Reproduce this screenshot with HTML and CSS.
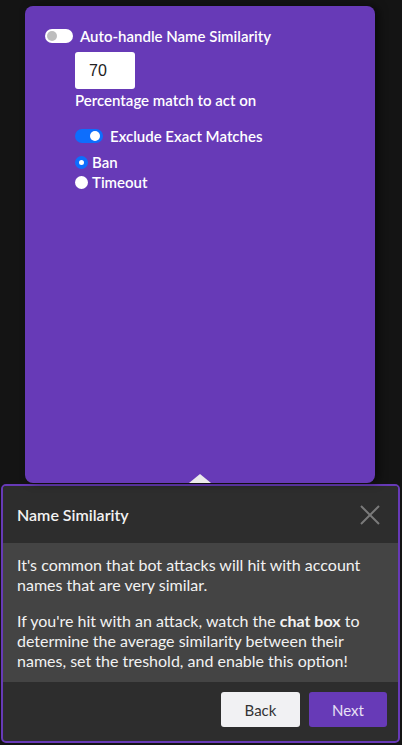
FILE: index.html
```html
<!DOCTYPE html>
<html>
<head>
<meta charset="utf-8">
<link rel="stylesheet" href="styles.css">
</head>
<body>
<div class="card">
  <div class="row first">
    <span class="switch off"><span class="knob"></span></span>
    <span class="label">Auto-handle Name Similarity</span>
  </div>
  <div class="sub">
    <div class="input">70</div>
    <div class="hint">Percentage match to act on</div>
    <div class="row second">
      <span class="switch on"><span class="knob"></span></span>
      <span class="label">Exclude Exact Matches</span>
    </div>
    <div class="radio-row"><span class="radio checked"></span><span class="label">Ban</span></div>
    <div class="radio-row"><span class="radio"></span><span class="label">Timeout</span></div>
  </div>
  <span class="arrow"></span>
</div>
<div class="popover">
  <div class="pop-head">
    <span class="pop-title">Name Similarity</span>
    <svg class="close" width="20" height="20" viewBox="0 0 20 20"><path d="M1 1L19 19M19 1L1 19" stroke="#7a7a7a" stroke-width="2" fill="none"/></svg>
  </div>
  <div class="pop-body">
    <p>It's common that bot attacks will hit with account names that are very similar.</p>
    <p>If you're hit with an attack, watch the <b>chat box</b> to determine the average similarity between their names, set the treshold, and enable this option!</p>
  </div>
  <div class="pop-foot">
    <button class="btn back">Back</button>
    <button class="btn next">Next</button>
  </div>
</div>
</body>
</html>
```
FILE: styles.css
```css
* { box-sizing: border-box; }
html, body { margin: 0; padding: 0; }
body {
  background: #141414;
  font-family: "Lato", "Open Sans", sans-serif;
  color: #fff;
  width: 402px;
  height: 745px;
  overflow: hidden;
  padding-top: 6px;
}
.card {
  position: relative;
  margin: 0 27px 0 25px;
  height: 477px;
  background: #673ab7;
  border-radius: 8px;
  box-shadow: 4px 0 8px rgba(0,0,0,0.5);
  padding: 21px 0 0 20px;
}
.row { display: flex; align-items: center; }
.label { font-size: 15px; font-weight: 600; line-height: 18px; color: #fff; }
.switch {
  position: relative;
  width: 28px;
  height: 14px;
  border-radius: 7px;
  margin-right: 7px;
  flex: none;
}
.switch .knob {
  position: absolute;
  top: 2px;
  width: 10px;
  height: 10px;
  border-radius: 50%;
}
.switch.off { background: #fff; }
.switch.off .knob { left: 2px; background: #bdbdbd; }
.switch.on { background: #0d6efd; }
.switch.on .knob { right: 3px; background: #fff; }
.sub { padding-left: 30px; }
.input {
  margin-top: 7px;
  width: 60px;
  height: 37px;
  background: #fff;
  border-radius: 3px;
  color: #222;
  font-family: "Liberation Sans", Arial, sans-serif;
  font-size: 16px;
  line-height: 37px;
  padding-left: 14px;
}
.hint { font-size: 15px; font-weight: 600; margin-top: 2px; line-height: 18px; }
.row.second { margin-top: 18px; }
.radio-row { display: flex; align-items: center; height: 20px; }
.row.second + .radio-row { margin-top: 7px; }
.radio {
  width: 13px;
  height: 13px;
  border-radius: 50%;
  background: #fff;
  margin-right: 4px;
  flex: none;
}
.radio.checked {
  background: #fff;
  border: 4px solid #0d6efd;
}
.arrow {
  position: absolute;
  left: 164px;
  bottom: 0;
  width: 0;
  height: 0;
  border-left: 11px solid transparent;
  border-right: 11px solid transparent;
  border-bottom: 9px solid #ebebeb;
}
.popover {
  margin: 1px 0 0 1px;
  width: 399px;
  height: 259px;
  border: 2px solid #673ab7;
  border-radius: 5px;
  overflow: hidden;
  display: flex;
  flex-direction: column;
  background: #2d2d2d;
}
.pop-head {
  height: 57px;
  flex: none;
  display: flex;
  align-items: center;
  justify-content: space-between;
  padding: 0 18px 0 14px;
  background: #2d2d2d;
}
.pop-title { font-size: 16px; font-weight: 600; color: #f2f2f2; }
.close { display: block; }
.pop-body {
  background: #444;
  padding: 12px 14px 11px 14px;
  flex: none;
}
.pop-body p {
  margin: 0;
  font-size: 16px;
  line-height: 20px;
  color: #f2f2f2;
}
.pop-body p + p { margin-top: 16px; }
.pop-body b { font-weight: 700; }
.pop-foot {
  flex: 1;
  display: flex;
  justify-content: flex-end;
  align-items: flex-start;
  gap: 9px;
  padding: 10px 11px 0 0;
}
.btn {
  height: 35px;
  border: none;
  border-radius: 3px;
  font-family: "Lato", sans-serif;
  font-size: 15px;
  padding: 0;
}
.btn.back { width: 79px; background: #f1f1f3; color: #333; }
.btn.next { width: 78px; background: #673ab7; color: #e8e0f5; }
```
